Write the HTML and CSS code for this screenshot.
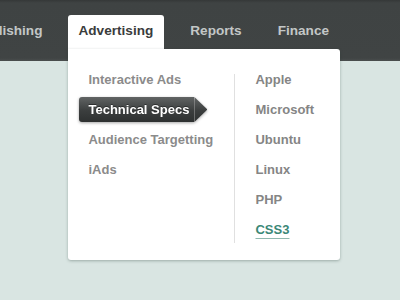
FILE: index.html
```html
<!DOCTYPE html>
<html>
<head>
<meta charset="utf-8">
<link rel="stylesheet" href="styles.css">
</head>
<body>
<header class="bar">
  <nav class="nav">
    <div class="nav-item">Publishing</div>
    <div class="nav-item active">Advertising
      <div class="dropdown">
        <ul class="col col-left">
          <li>Interactive Ads</li>
          <li class="current"><span class="pill">Technical Specs</span></li>
          <li>Audience Targetting</li>
          <li>iAds</li>
        </ul>
        <div class="divider"></div>
        <ul class="col col-right">
          <li>Apple</li>
          <li>Microsoft</li>
          <li>Ubuntu</li>
          <li>Linux</li>
          <li>PHP</li>
          <li class="link">CSS3</li>
        </ul>
      </div>
    </div>
    <div class="nav-item">Reports</div>
    <div class="nav-item">Finance</div>
  </nav>
</header>
</body>
</html>
```
FILE: styles.css
```css
html, body {
  margin: 0;
  padding: 0;
  width: 400px;
  height: 300px;
  overflow: hidden;
  background: #d9e5e2;
  font-family: "Liberation Sans", Arial, sans-serif;
}
.bar {
  height: 61px;
  background: linear-gradient(#353838 0px, #3f4343 3px, #404444 58px, #4a4e4e 61px);
  box-sizing: border-box;
}
.nav {
  display: flex;
  gap: 16px;
  margin-left: -37px;
  padding-top: 15px;
}
.nav-item {
  position: relative;
  padding: 8px 10px 0 10px;
  height: 38px;
  line-height: 16px;
  font-size: 13.6px;
  font-weight: bold;
  color: #c3c7c7;
  white-space: nowrap;
}
.nav-item.active {
  background: #fff;
  color: #3a3c3c;
  border-radius: 3px 3px 0 0;
  padding-right: 11px;
  z-index: 2;
}
.dropdown {
  position: absolute;
  left: 0;
  top: 34px;
  width: 272px;
  height: 211px;
  background: #fff;
  border-radius: 0 3px 3px 3px;
  box-shadow: 0 1px 3px rgba(40, 60, 55, 0.35);
  display: flex;
  box-sizing: border-box;
  padding: 16px 0 0 20px;
}
.col {
  list-style: none;
  margin: 0;
  padding: 0;
}
.col li {
  height: 30px;
  line-height: 30px;
  font-size: 13px;
  font-weight: bold;
  color: #8b8b8b;
}
.col-left {
  width: 146px;
}
.col-right {
  padding-left: 20px;
}
.col-right li {
  color: #858585;
}
.divider {
  width: 1px;
  height: 169px;
  margin-top: 9px;
  background: #e0e0e0;
}
.col li.current {
  display: flex;
  align-items: flex-start;
  padding-top: 2px;
  height: 28px;
  filter: drop-shadow(0 1px 1.5px rgba(0, 0, 0, 0.35));
}
.pill {
  position: relative;
  display: block;
  height: 25px;
  line-height: 25px;
  margin-left: -9px;
  padding: 0 5px 0 9px;
  color: #fff;
  text-shadow: 0 -1px 0 rgba(0, 0, 0, 0.4);
  background: linear-gradient(#616464, #3b3e3e 55%, #2e3131);
  border-radius: 3px 0 0 3px;
}
.pill::after {
  content: "";
  position: absolute;
  top: 0;
  right: -13px;
  width: 13px;
  height: 25px;
  background: linear-gradient(#616464, #3b3e3e 55%, #2e3131);
  clip-path: polygon(0 0, 100% 50%, 0 100%);
}
.col li.link {
  color: #3b8877;
  text-decoration: underline;
  text-decoration-color: #8fb8ae;
  text-underline-offset: 4px;
}
```
